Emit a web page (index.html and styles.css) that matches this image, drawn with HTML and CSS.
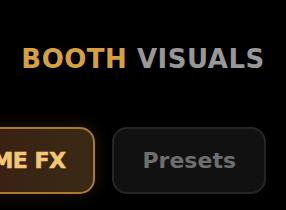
FILE: index.html
```html
<!doctype html>
<html>
  <head>
    <meta charset="utf-8">
    <meta name="viewport" content="width=device-width, initial-scale=1.0">
    <title>Booth Visuals</title>
    <link rel="stylesheet" href="styles.css">
  </head>
  <body>
    <header class="brand">
      <h1><span class="brand-gold">BOOTH</span> <span class="brand-grey">VISUALS</span></h1>
    </header>
    <nav class="tabs">
      <button class="tab active">GAME FX</button>
      <button class="tab">Presets</button>
    </nav>
  </body>
</html>
```

FILE: styles.css
```css
html, body {
  background: #000;
  height: 100%;
}
body {
  font-family: "DejaVu Sans", Roboto, sans-serif;
  margin: 0;
  overflow: hidden;
}
.brand {
  padding-top: 46px;
  text-align: center;
}
.brand h1 {
  font-size: 26px;
  font-weight: 700;
  letter-spacing: 0.5px;
  line-height: 26px;
  margin: 0;
}
.brand-gold {
  color: #d6a040;
}
.brand-grey {
  color: #989898;
}
.tabs {
  display: flex;
  gap: 17px;
  justify-content: flex-end;
  margin-top: 55px;
  padding-right: 20px;
}
.tab {
  /* reset */
  appearance: none;
  cursor: pointer;
  font-family: inherit;
  margin: 0;
  white-space: nowrap;
  /* bespoke */
  background: #111;
  border: solid 2px #262626;
  border-radius: 15px;
  color: #6e6e6e;
  flex: 0 0 auto;
  font-size: 22px;
  font-weight: 700;
  height: 67px;
  padding: 0 28px;
}
.tab.active {
  background: linear-gradient(90deg, #3c1a12 0%, #3a2414 60%, #3a2a14 100%);
  border-color: #a67a32;
  box-shadow: 0 0 18px rgba(200, 140, 40, 0.18);
  color: #f2c878;
  letter-spacing: -0.5px;
  -webkit-text-stroke: 0.6px #f2c878;
}
```
